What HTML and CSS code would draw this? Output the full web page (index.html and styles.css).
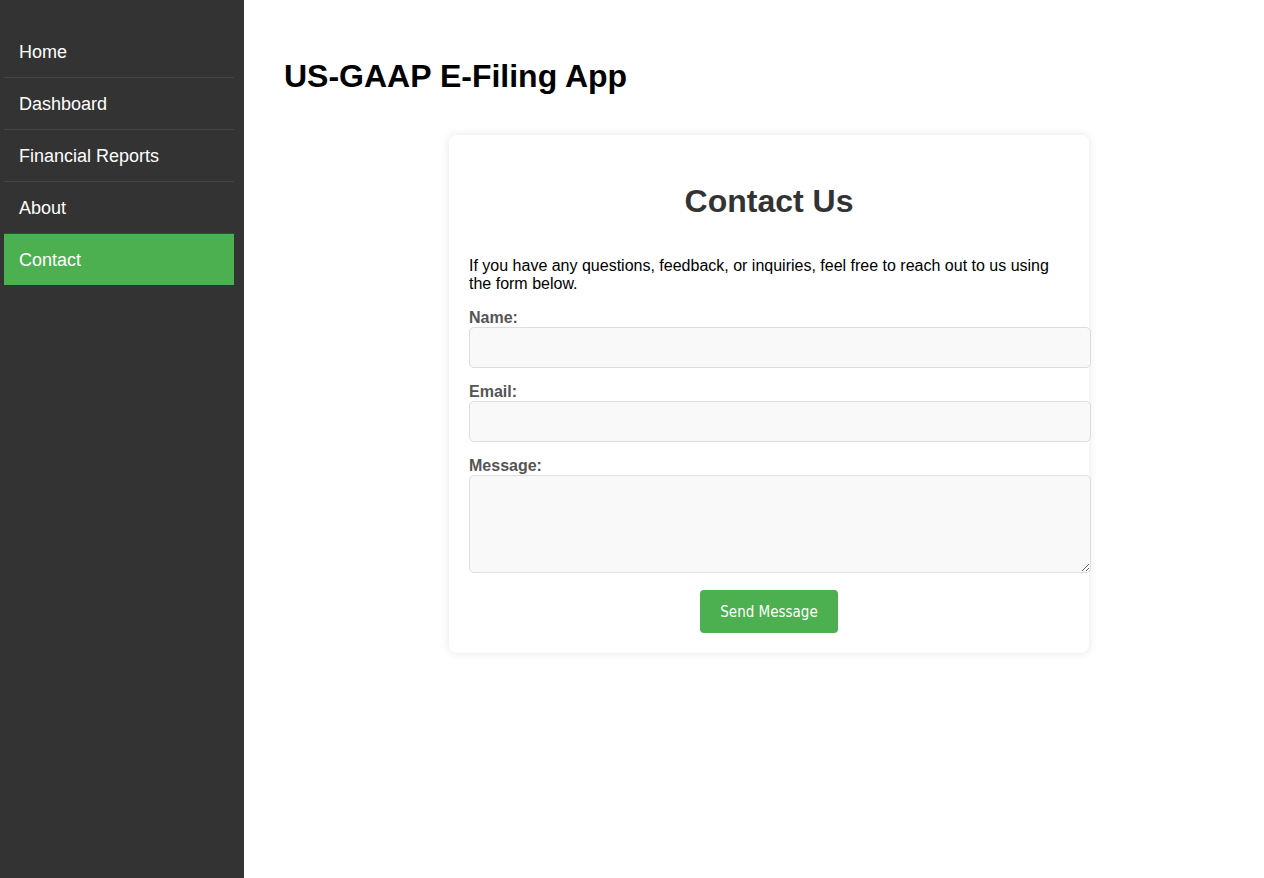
FILE: index.html
```html
<!DOCTYPE html>
<html lang="en">
<head>
<meta charset="utf-8">
<title>US-GAAP E-Filing App</title>
<link rel="stylesheet" href="styles.css">
</head>
<body>
<div class="layout">
  <nav class="sidebar">
    <ul class="nav">
      <li><a href="#">Home</a></li>
      <li><a href="#">Dashboard</a></li>
      <li><a href="#">Financial Reports</a></li>
      <li><a href="#">About</a></li>
      <li class="active"><a href="#">Contact</a></li>
    </ul>
  </nav>
  <main class="main">
    <h1 class="title">US-GAAP E-Filing App</h1>
    <section class="card">
      <h2 class="card-title">Contact Us</h2>
      <p class="intro">If you have any questions, feedback, or inquiries, feel free to reach out to us using the form below.</p>
      <form class="form">
        <label for="name">Name:</label>
        <input id="name" type="text" class="field">
        <label for="email">Email:</label>
        <input id="email" type="email" class="field">
        <label for="message">Message:</label>
        <textarea id="message" class="field area"></textarea>
        <div class="actions">
          <button type="button" class="btn">Send Message</button>
        </div>
      </form>
    </section>
  </main>
</div>
</body>
</html>
```
FILE: styles.css
```css
html, body {
  margin: 0;
  padding: 0;
  height: 100%;
}
body {
  font-family: "Liberation Sans", Arial, sans-serif;
  background: #fff;
  color: #000;
}
.layout {
  display: flex;
  min-height: 100%;
}
.sidebar {
  width: 244px;
  flex: 0 0 244px;
  background: #333;
  box-sizing: border-box;
  padding: 26px 10px 0 4px;
}
.nav {
  list-style: none;
  margin: 0;
  padding: 0;
}
.nav li {
  border-bottom: 1px solid #444;
}
.nav li.active {
  background: #4caf50;
  border-bottom: none;
}
.nav a {
  display: block;
  padding: 16px 15px 15px;
  color: #fff;
  text-decoration: none;
  font-size: 18px;
  line-height: 20px;
}
.nav li.active a {
  padding-bottom: 15px;
}
.main {
  flex: 1;
  padding: 37px 10px 40px 40px;
}
.title {
  font-size: 32px;
  margin: 21px 0 40px;
  line-height: 37px;
  font-weight: bold;
}
.card {
  width: 600px;
  margin: 0 auto;
  padding: 20px;
  background: #fff;
  border-radius: 8px;
  box-shadow: 0 0 10px rgba(0, 0, 0, 0.1);
}
.card-title {
  text-align: center;
  color: #333;
  font-size: 32px;
  line-height: 37px;
  margin: 28px 0 37px;
}
.intro {
  font-size: 16px;
  line-height: 18px;
  margin: 0 0 16px;
}
.form label {
  display: block;
  font-weight: bold;
  color: #555;
  font-size: 16px;
  line-height: 18px;
}
.field {
  display: block;
  width: 100%;
  padding: 10px;
  margin: 0 0 15px;
  border: 1px solid #ddd;
  border-radius: 5px;
  background: #f9f9f9;
  font-family: "Liberation Sans", Arial, sans-serif;
  font-size: 16px;
  height: 19px;
  box-sizing: content-box;
}
.area {
  height: 76px;
  margin-bottom: 17px;
  resize: vertical;
}
.actions {
  display: flex;
  justify-content: center;
}
.btn {
  background: #4caf50;
  color: #fff;
  border: none;
  border-radius: 4px;
  padding: 12px 20px;
  height: 43px;
  font-family: "DejaVu Sans Condensed", "DejaVu Sans", sans-serif;
  font-size: 15px;
  cursor: pointer;
}
```
